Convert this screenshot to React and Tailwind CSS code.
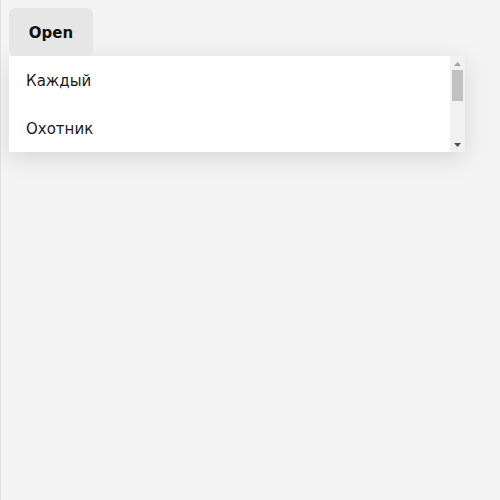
export default function App() {
  const items = ["Каждый", "Охотник"];
  return (
    <div
      className="min-h-[500px] w-[500px] bg-[#f4f4f4] border-l border-[#e2e2e2] pl-[8px] pt-[8px]"
      style={{ fontFamily: '"DejaVu Sans", sans-serif' }}
    >
      <button className="h-[48px] w-[84px] pt-[2px] rounded-[6px] bg-[#e6e6e6] text-[15px] font-bold text-[#111]">
        Open
      </button>
      <div className="flex w-[456px] h-[96px] bg-white shadow-[0_6px_24px_rgba(0,0,0,0.12)]">
        <div className="flex-1">
          {items.map((t) => (
            <div key={t} className="h-[48px] flex items-center pt-[2px] pl-[17px] text-[15px] text-[#1a1a1a]">
              {t}
            </div>
          ))}
        </div>
        <div className="w-[15px] bg-[#f1f1f1] flex flex-col items-center">
          <svg width="15" height="14" viewBox="0 0 15 14" className="shrink-0">
            <polygon points="4,10 11,10 7.5,6" fill="#a3a3a3" />
          </svg>
          <div className="w-[11px] h-[31px] bg-[#c1c1c1]" />
          <div className="flex-1" />
          <svg width="15" height="14" viewBox="0 0 15 14" className="shrink-0">
            <polygon points="4,5 11,5 7.5,9" fill="#505050" />
          </svg>
        </div>
      </div>
    </div>
  );
}
